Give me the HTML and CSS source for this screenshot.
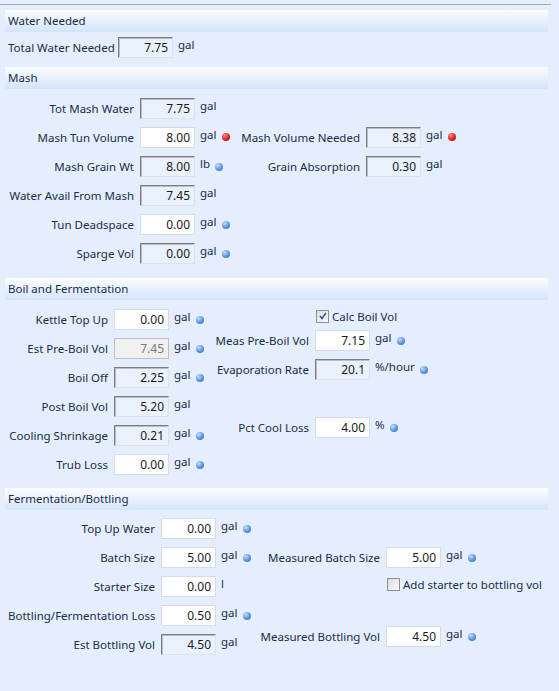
FILE: index.html
```html
<!DOCTYPE html>
<html lang="en">
<head>
    <meta charset="UTF-8">
    <title>Water Needed</title>
    <link rel="stylesheet" href="styles.css">
</head>
<body>
    <div class="panel">
        <div class="sec-head">Water Needed</div>
        <div class="sec-body water">
            <div class="col left">
                <div class="row"><label>Total Water Needed</label><input class="ro" value="7.75" readonly><span class="unit">gal</span></div>
            </div>
        </div>

        <div class="sec-head">Mash</div>
        <div class="sec-body mash">
            <div class="col left">
                <div class="row"><label>Tot Mash Water</label><input class="ro" value="7.75" readonly><span class="unit">gal</span></div>
                <div class="row"><label>Mash Tun Volume</label><input value="8.00"><span class="unit">gal</span><span class="dot red"></span></div>
                <div class="row"><label>Mash Grain Wt</label><input class="ro" value="8.00" readonly><span class="unit">lb</span><span class="dot"></span></div>
                <div class="row"><label>Water Avail From Mash</label><input class="ro" value="7.45" readonly><span class="unit">gal</span></div>
                <div class="row"><label>Tun Deadspace</label><input value="0.00"><span class="unit">gal</span><span class="dot"></span></div>
                <div class="row"><label>Sparge Vol</label><input class="ro" value="0.00" readonly><span class="unit">gal</span><span class="dot"></span></div>
            </div>
            <div class="col right">
                <div class="row"><label>Mash Volume Needed</label><input class="ro" value="8.38" readonly><span class="unit">gal</span><span class="dot red"></span></div>
                <div class="row"><label>Grain Absorption</label><input class="ro" value="0.30" readonly><span class="unit">gal</span></div>
            </div>
        </div>

        <div class="sec-head">Boil and Fermentation</div>
        <div class="sec-body boil">
            <div class="col left">
                <div class="row"><label>Kettle Top Up</label><input value="0.00"><span class="unit">gal</span><span class="dot"></span></div>
                <div class="row"><label>Est Pre-Boil Vol</label><input class="off" value="7.45" disabled><span class="unit">gal</span><span class="dot"></span></div>
                <div class="row"><label>Boil Off</label><input class="ro" value="2.25" readonly><span class="unit">gal</span><span class="dot"></span></div>
                <div class="row"><label>Post Boil Vol</label><input class="ro" value="5.20" readonly><span class="unit">gal</span></div>
                <div class="row"><label>Cooling Shrinkage</label><input class="ro" value="0.21" readonly><span class="unit">gal</span><span class="dot"></span></div>
                <div class="row"><label>Trub Loss</label><input value="0.00"><span class="unit">gal</span><span class="dot"></span></div>
            </div>
            <div class="col right">
                <div class="check-row"><span class="box checked"><svg width="8" height="8" viewBox="0 0 8 8"><path d="M1 4 L3 6.5 L7 1" fill="none" stroke="#3d5a80" stroke-width="1.6"/></svg></span>Calc Boil Vol</div>
                <div class="row"><label>Meas Pre-Boil Vol</label><input value="7.15"><span class="unit">gal</span><span class="dot"></span></div>
                <div class="row"><label>Evaporation Rate</label><input class="ro" value="20.1" readonly><span class="unit">%/hour</span><span class="dot"></span></div>
                <div class="row skip"><label>Pct Cool Loss</label><input value="4.00"><span class="unit">%</span><span class="dot"></span></div>
            </div>
        </div>

        <div class="sec-head">Fermentation/Bottling</div>
        <div class="sec-body ferm">
            <div class="col left">
                <div class="row"><label>Top Up Water</label><input value="0.00"><span class="unit">gal</span><span class="dot"></span></div>
                <div class="row"><label>Batch Size</label><input value="5.00"><span class="unit">gal</span><span class="dot"></span></div>
                <div class="row"><label>Starter Size</label><input value="0.00"><span class="unit">l</span></div>
                <div class="row"><label>Bottling/Fermentation Loss</label><input value="0.50"><span class="unit">gal</span><span class="dot"></span></div>
                <div class="row"><label>Est Bottling Vol</label><input class="ro" value="4.50" readonly><span class="unit">gal</span></div>
            </div>
            <div class="col right">
                <div class="row"><label>Measured Batch Size</label><input value="5.00"><span class="unit">gal</span><span class="dot"></span></div>
                <div class="check-row"><span class="box"></span>Add starter to bottling vol</div>
                <div class="row"><label>Measured Bottling Vol</label><input value="4.50"><span class="unit">gal</span><span class="dot"></span></div>
            </div>
        </div>
    </div>
</body>
</html>
```

FILE: styles.css
```css
body {
    margin: 0;
    background-color: #e4eefc;
    font-family: "Noto Sans", "Open Sans", sans-serif;
    font-size: 11.5px;
    color: #1b2c4a;
}
.panel {
    width: 543px;
    padding: 5px 3px 0 5px;
    border-top: 1px solid #a3a9b2;
    margin-top: 4px;
    height: 681px;
    box-sizing: content-box;
}
.sec-head {
    height: 22px;
    line-height: 22px;
    padding-left: 3px;
    background: linear-gradient(#fbfdff, #d5e4fa);
}
.sec-body {
    display: flex;
    padding-left: 3px;
}
.col {
    display: flex;
    flex-direction: column;
    gap: 8px;
}
.row {
    display: flex;
    height: 21px;
}
.row label {
    text-align: right;
    white-space: nowrap;
    line-height: 22px;
    margin-right: 6px;
}
input {
    width: 55px;
    height: 21px;
    box-sizing: border-box;
    padding: 0 4px 0 2px;
    margin: 0;
    text-align: right;
    font-family: inherit;
    font-size: 12px;
    color: #1a1a1a;
    background: #fff;
    border: 1px solid #d2dde9;
    outline: none;
}
input.ro {
    background: #e9f1fc;
    border-color: #7d7d7d #d9e3ee #d9e3ee #7d7d7d;
    box-shadow: inset 1px 1px 0 #b9bec6;
}
input.off {
    background: #f0f0f0;
    border-color: #bfbfbf;
    color: #7a7a7a;
}
.unit {
    margin-left: 5px;
    line-height: 15px;
}
.dot {
    width: 8px;
    height: 8px;
    border-radius: 50%;
    margin: 7px 0 0 5px;
    background: radial-gradient(circle at 35% 30%, #c4dcfa, #5b93e0 55%, #2e68c2);
}
.dot.red {
    margin-top: 6px;
    background: radial-gradient(circle at 35% 30%, #ff8a80, #e0201c 55%, #b20d0d);
}
.check-row {
    display: flex;
    align-items: center;
    height: 14px;
    white-space: nowrap;
}
.box {
    width: 11px;
    height: 11px;
    border: 1px solid #8e8f8f;
    background: linear-gradient(135deg, #dcdcdc, #fafafa);
    margin-right: 3px;
    display: flex;
    align-items: center;
    justify-content: center;
}

/* per section columns */
.water { padding-top: 5px; padding-bottom: 9px; }
.water label { width: 104px; }

.mash { padding-top: 9px; padding-bottom: 14px; }
.mash .left { width: 228px; }
.mash .left label { width: 126px; }
.mash .right { padding-top: 29px; }
.mash .right label { width: 124px; }

.boil { padding-top: 9px; padding-bottom: 13px; }
.boil .left { width: 202px; }
.boil .left label { width: 100px; }
.boil .right { gap: 0; }
.boil .right label { width: 99px; }
.boil .check-row { padding-left: 106px; margin-top: 0; margin-bottom: 7px; }
.boil .right .row + .row { margin-top: 8px; }
.boil .right .row.skip { margin-top: 37px; }

.ferm { padding-top: 8px; }
.ferm .left { width: 252px; }
.ferm .left label { width: 147px; }
.ferm .right { padding-top: 29px; gap: 0; }
.ferm .right label { width: 120px; }
.ferm .check-row { padding-left: 127px; margin-top: 9px; margin-bottom: 35px; }
```
